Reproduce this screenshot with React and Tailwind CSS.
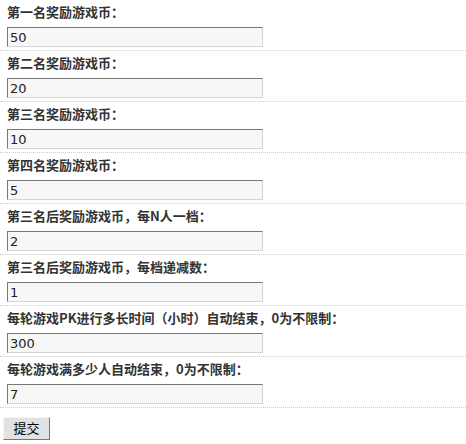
import React from 'react';

const rows = [
  { label: '第一名奖励游戏币：', value: '50' },
  { label: '第二名奖励游戏币：', value: '20' },
  { label: '第三名奖励游戏币：', value: '10' },
  { label: '第四名奖励游戏币：', value: '5' },
  { label: '第三名后奖励游戏币，每N人一档：', value: '2' },
  { label: '第三名后奖励游戏币，每档递减数：', value: '1' },
  { label: '每轮游戏PK进行多长时间（小时）自动结束，0为不限制：', value: '300' },
  { label: '每轮游戏满多少人自动结束，0为不限制：', value: '7' },
];

const App = () => {
  return (
    <div className="w-[466px] h-[444px] bg-white overflow-hidden" style={{ fontFamily: '"DejaVu Sans", "Noto Sans CJK SC", sans-serif' }}>
      <form onSubmit={(e) => e.preventDefault()}>
        {rows.map((row) => (
          <div key={row.label} className="border-b border-dotted border-[#cfcfcf]">
            <div className="h-[24px] leading-[24px] pl-[7px] text-[13px] font-bold text-[#333] whitespace-nowrap" style={{ fontFamily: '"Noto Sans CJK SC", sans-serif' }}>
              {row.label}
            </div>
            <div className="pt-[3px] pb-[3px] pl-[7px]">
              <input
                type="text"
                defaultValue={row.value}
                className="block w-[256px] h-[20px] bg-[#f7f7f7] border border-t-[#777] border-l-[#777] border-r-[#d4d4d4] border-b-[#d4d4d4] pl-[2px] text-[13px] leading-[18px] text-[#222] outline-none"
              />
            </div>
          </div>
        ))}
        <div className="pt-[8px] pl-[3px]">
          <button
            type="submit"
            className="w-[47px] h-[23px] bg-[#e2e2e2] border border-t-[#f4f4f4] border-l-[#f4f4f4] border-r-[#777] border-b-[#777] text-[13px] text-black leading-[20px]"
            style={{ fontFamily: '"Noto Sans CJK SC", sans-serif' }}
          >
            提交
          </button>
        </div>
      </form>
    </div>
  );
};

export default App;
